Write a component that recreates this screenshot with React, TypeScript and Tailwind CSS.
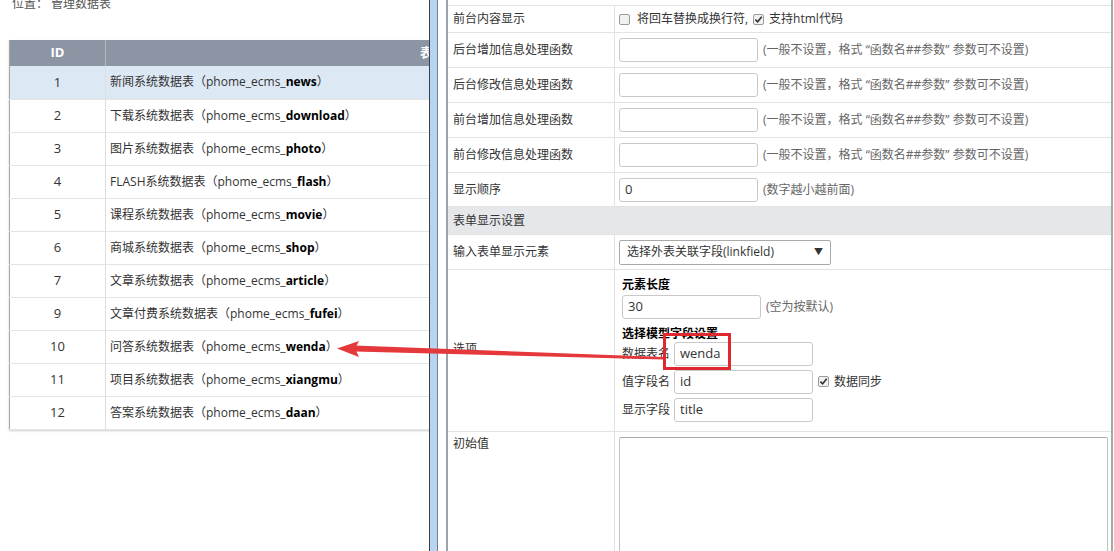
import React from "react";

const TABLES: { id: number; name: string; key: string }[] = [
  { id: 1, name: "新闻系统数据表", key: "news" },
  { id: 2, name: "下载系统数据表", key: "download" },
  { id: 3, name: "图片系统数据表", key: "photo" },
  { id: 4, name: "FLASH系统数据表", key: "flash" },
  { id: 5, name: "课程系统数据表", key: "movie" },
  { id: 6, name: "商城系统数据表", key: "shop" },
  { id: 7, name: "文章系统数据表", key: "article" },
  { id: 9, name: "文章付费系统数据表", key: "fufei" },
  { id: 10, name: "问答系统数据表", key: "wenda" },
  { id: 11, name: "项目系统数据表", key: "xiangmu" },
  { id: 12, name: "答案系统数据表", key: "daan" },
];

const HINT = "(一般不设置，格式 “函数名##参数” 参数可不设置)";

function Box({ checked }: { checked?: boolean }) {
  return (
    <span className="inline-flex h-[11px] w-[11px] items-center justify-center rounded-[2px] border border-[#9a9a9a] bg-[#f1f1f1]">
      {checked && (
        <svg viewBox="0 0 10 10" className="h-[9px] w-[9px]">
          <path d="M1.5 5.2 L4 7.6 L8.6 2" fill="none" stroke="#333" strokeWidth="1.8" />
        </svg>
      )}
    </span>
  );
}

function Input({ value = "" }: { value?: string }) {
  return (
    <div className="flex h-[24px] w-[139px] items-center rounded-[3px] border border-[#c9c9c9] bg-white px-[5px] text-[13px] text-[#333]">
      {value}
    </div>
  );
}

function Row({ label, children, h = "h-[35px]" }: { label: string; children?: React.ReactNode; h?: string }) {
  return (
    <div className={`grid grid-cols-[167px_1fr] border-b border-[#e2e2e2] ${h}`}>
      <div className="flex items-center border-r border-[#e2e2e2] pl-[5px]">{label}</div>
      <div className="flex items-center gap-[5px] pl-[4px]">{children}</div>
    </div>
  );
}

export default function App() {
  return (
    <div className="relative flex h-[551px] w-[1114px] overflow-hidden bg-white font-['Open_Sans','Noto_Sans_CJK_SC',sans-serif] text-[12px] text-[#333]">
      {/* left window */}
      <div className="w-[429px] shrink-0 overflow-hidden">
        <p className="mt-[-5px] pl-[12px] text-[#555]">位置：&nbsp;管理数据表</p>
        <table className="ml-[9px] mt-[27px] w-[751px] border-collapse border-b border-l border-[#a8a8a8] shadow-[0_1px_2px_rgba(0,0,0,0.2)]">
          <thead>
            <tr className="h-[26px] bg-[#8c95a3] text-[13px] font-bold text-white">
              <th className="w-[96px] border-r border-[#b4bac4]">ID</th>
              <th>表名</th>
            </tr>
          </thead>
          <tbody>
            {TABLES.map((t, i) => (
              <tr key={t.id} className={`h-[33px] border-b border-[#e4e4e4] text-[12px] ${i === 0 ? "bg-[#dce8f4]" : "bg-white"}`}>
                <td className="border-r border-[#dedede] text-center text-[13px]">{t.id}</td>
                <td className="pl-[4px]">
                  {t.name}（phome_ecms_<b className="text-black">{t.key}</b>）
                </td>
              </tr>
            ))}
          </tbody>
        </table>
      </div>

      {/* window edge */}
      <div className="w-px shrink-0 bg-[#3a3f47]" />
      <div className="w-[7px] shrink-0 bg-[#b8d4f0]" />
      <div className="w-px shrink-0 bg-[#6f8196]" />

      {/* right window */}
      <div className="flex-1 pl-[8px] pr-[1px]">
        <div className="h-full border-l-2 border-r-2 border-l-[#9aa2ad] border-r-[#a8a8a8]">
          <div className="h-[6px] border-b border-[#e2e2e2]" />
          <Row label="前台内容显示" h="h-[27px]">
            <Box />
            <span className="ml-[2px]">将回车替换成换行符,</span>
            <Box checked />
            <span>支持html代码</span>
          </Row>
          <Row label="后台增加信息处理函数">
            <Input />
            <span className="text-[#666]">{HINT}</span>
          </Row>
          <Row label="后台修改信息处理函数">
            <Input />
            <span className="text-[#666]">{HINT}</span>
          </Row>
          <Row label="前台增加信息处理函数">
            <Input />
            <span className="text-[#666]">{HINT}</span>
          </Row>
          <Row label="前台修改信息处理函数">
            <Input />
            <span className="text-[#666]">{HINT}</span>
          </Row>
          <Row label="显示顺序" h="h-[34px]">
            <Input value="0" />
            <span className="text-[#666]">(数字越小越前面)</span>
          </Row>
          <div className="flex h-[28px] items-center border-b border-[#e2e2e2] bg-[#e5e7ea] pl-[5px]">表单显示设置</div>
          <Row label="输入表单显示元素">
            <div className="flex h-[25px] w-[212px] items-center justify-between rounded-[2px] border border-[#a9a9a9] px-[7px] text-[12px]">
              <span>选择外表关联字段(linkfield)</span>
              <span className="text-[9px]">▼</span>
            </div>
          </Row>
          <div className="grid h-[162px] grid-cols-[167px_1fr] border-b border-[#e2e2e2]">
            <div className="flex items-center border-r border-[#e2e2e2] pl-[5px] pb-[4px]">选项</div>
            <div className="flex flex-col pl-[7px] pt-[6px]">
              <b className="leading-[17px] text-black">元素长度</b>
              <div className="mt-[2px] flex items-center gap-[5px]">
                <Input value="30" />
                <span className="text-[#666]">(空为按默认)</span>
              </div>
              <b className="mt-[6px] leading-[17px] text-black">选择模型字段设置</b>
              <div className="flex flex-col gap-[4px]">
                <div className="flex items-center gap-[2px]">
                  <span className="w-[50px]">数据表名</span>
                  <Input value="wenda" />
                </div>
                <div className="flex items-center gap-[2px]">
                  <span className="w-[50px]">值字段名</span>
                  <Input value="id" />
                  <span className="ml-[3px]"><Box checked /></span>
                  <span className="ml-[3px]">数据同步</span>
                </div>
                <div className="flex items-center gap-[2px]">
                  <span className="w-[50px]">显示字段</span>
                  <Input value="title" />
                </div>
              </div>
            </div>
          </div>
          <div className="grid h-[130px] grid-cols-[167px_1fr]">
            <div className="border-r border-[#e2e2e2] pl-[5px] pt-[3px]">初始值</div>
            <div className="pl-[4px] pr-[3px] pt-[5px]">
              <div className="h-[140px] rounded-[2px] border border-[#c2c2c2] border-t-[#aaa]" />
            </div>
          </div>
        </div>
      </div>

      {/* annotation */}
      <svg className="pointer-events-none absolute left-0 top-0" width="1114" height="551">
        <polygon points="354,345.5 354,351.5 663,359.5 663,357" fill="#e5383b" />
        <polygon points="337,348.5 359,341 355,348.5 359,357" fill="#e5383b" />
        <rect x="664.5" y="334.5" width="65" height="34" fill="none" stroke="#e0292e" strokeWidth="3" />
      </svg>
    </div>
  );
}
